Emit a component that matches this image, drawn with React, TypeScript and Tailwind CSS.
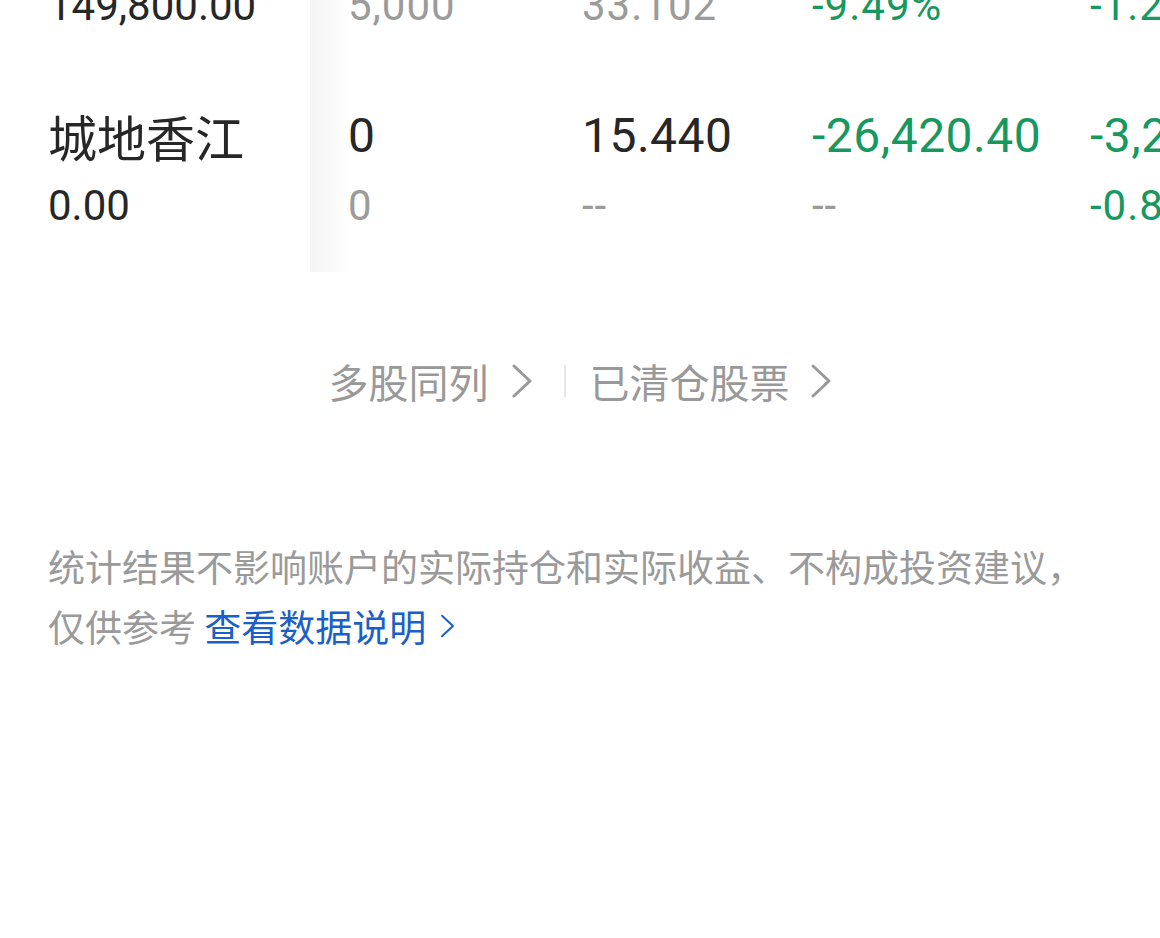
import React from "react";

type Cell = { main: string; sub: string; mainTone: Tone; subTone: Tone };
type Tone = "dark" | "gray" | "green";

const toneClass: Record<Tone, string> = {
  dark: "text-[#272727]",
  gray: "text-[#9b9b9b]",
  green: "text-[#17985e]",
};

const rows: { name: string; amount: string; cells: Cell[] }[] = [
  {
    name: "城地香江",
    amount: "149,800.00",
    cells: [
      { main: "5,000", sub: "5,000", mainTone: "dark", subTone: "gray" },
      { main: "30.080", sub: "33.102", mainTone: "dark", subTone: "gray" },
      { main: "-15,110.00", sub: "-9.49%", mainTone: "green", subTone: "green" },
      { main: "-1,850.00", sub: "-1.22%", mainTone: "green", subTone: "green" },
    ],
  },
  {
    name: "城地香江",
    amount: "0.00",
    cells: [
      { main: "0", sub: "0", mainTone: "dark", subTone: "gray" },
      { main: "15.440", sub: "--", mainTone: "dark", subTone: "gray" },
      { main: "-26,420.40", sub: "--", mainTone: "green", subTone: "gray" },
      { main: "-3,210.00", sub: "-0.86%", mainTone: "green", subTone: "green" },
    ],
  },
];

// 数据列宽，最后一列被屏幕截断
const colWidths = ["w-[234px]", "w-[230px]", "w-[278px]", "w-[240px]"];

const num = "font-['Roboto','Noto_Sans_CJK_SC',sans-serif]";
const cjk = "font-['Noto_Sans_CJK_SC','Noto_Sans',sans-serif]";

function Chevron({ className }: { className?: string }) {
  return (
    <svg viewBox="0 0 22 34" className={className} fill="none">
      <path d="M3 2 L19 17 L3 32" stroke="currentColor" strokeWidth="3" strokeLinecap="round" strokeLinejoin="round" />
    </svg>
  );
}

function HoldingRow({ row }: { row: (typeof rows)[number] }) {
  return (
    <div className="flex h-[200px]">
      <div className="sticky left-0 z-10 flex w-[310px] shrink-0 flex-col bg-white pl-12 pt-[34px]">
        <div className={`h-[60px] text-[49px] leading-[60px] text-[#272727] ${cjk}`}>{row.name}</div>
        <div className={`mt-[10px] h-[60px] text-[42px] leading-[60px] text-[#272727] ${num}`}>{row.amount}</div>
      </div>
      <div className="w-[38px] shrink-0" />
      {row.cells.map((c, i) => (
        <div key={i} className={`flex shrink-0 flex-col pt-[34px] ${colWidths[i]}`}>
          <div
            className={`h-[60px] whitespace-nowrap text-[48px] leading-[60px] tracking-[0.5px] ${num} ${toneClass[c.mainTone]}`}
          >
            {c.main}
          </div>
          <div
            className={`mt-[10px] h-[60px] whitespace-nowrap text-[42px] leading-[60px] tracking-[1px] ${num} ${toneClass[c.subTone]}`}
          >
            {c.sub}
          </div>
        </div>
      ))}
    </div>
  );
}

export default function App() {
  return (
    <div className="h-[938px] w-[1160px] overflow-hidden bg-white">
      {/* 持仓表格：页面已向下滚动，首行被截断 */}
      <div className="relative mt-[-128px]">
        {rows.map((r, i) => (
          <HoldingRow key={i} row={r} />
        ))}
        {/* 冻结列的阴影 */}
        <div className="pointer-events-none absolute left-[310px] top-0 h-[400px] w-[40px] bg-gradient-to-r from-[#f4f4f4] to-transparent" />
      </div>

      <div className={`mt-[79px] flex h-[60px] items-center justify-center text-[40px] text-[#999999] ${cjk}`}>
        <span>多股同列</span>
        <Chevron className="ml-[22px] h-[34px] w-[22px]" />
        <span className="ml-[31px] h-[32px] w-[2px] bg-[#e6e6e6]" />
        <span className="ml-[24px]">已清仓股票</span>
        <Chevron className="ml-[20px] h-[34px] w-[22px]" />
      </div>

      <p className={`mt-[125px] px-12 text-[37px] leading-[60px] text-[#9a9a9a] ${cjk}`}>
        统计结果不影响账户的实际持仓和实际收益、不构成投资建议，
        <br />
        仅供参考{" "}
        <span className="inline-flex items-center text-[#1a60c6]">
          查看数据说明
          <Chevron className="ml-[14px] h-[26px] w-[15px]" />
        </span>
      </p>
    </div>
  );
}
